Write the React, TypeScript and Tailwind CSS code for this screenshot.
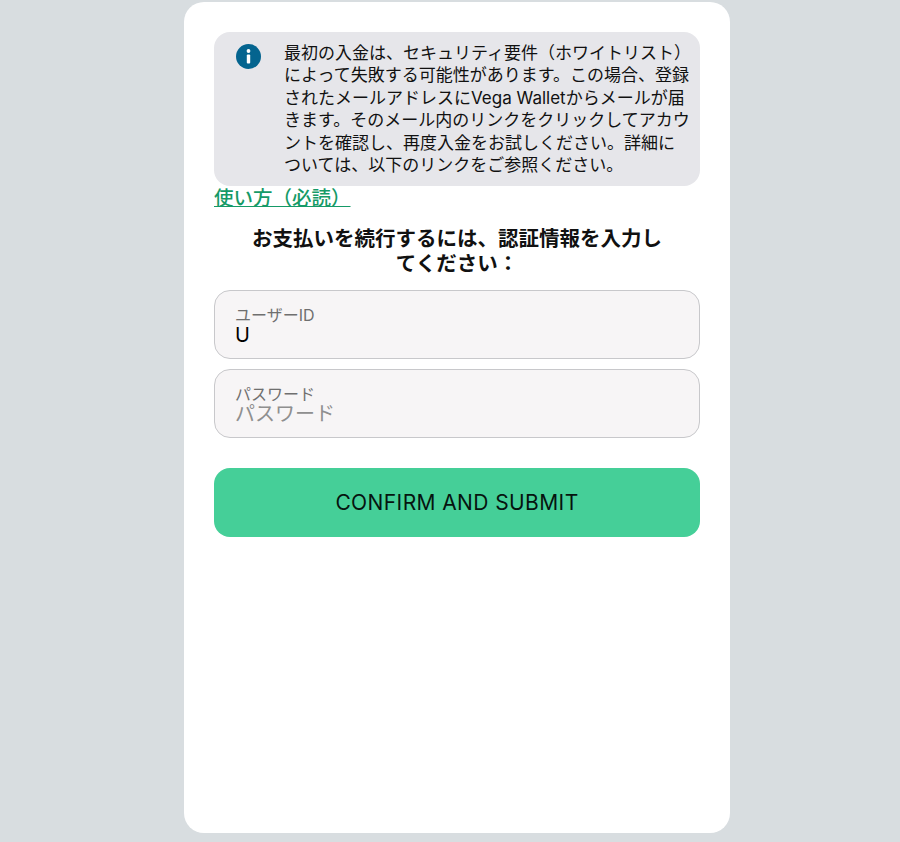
const font = "font-['Inter','Noto_Sans_CJK_JP',sans-serif]";

function Field({ label, value, placeholder }: { label: string; value?: string; placeholder?: string }) {
  return (
    <label className="block h-[69px] rounded-2xl border border-[#c8c8cb] bg-[#f7f5f6] px-[20px] pt-[15px]">
      <span className="block text-[16px] leading-[18px] text-[#6f6f6f]">{label}</span>
      <input
        readOnly
        value={value}
        placeholder={placeholder}
        className="block h-[22px] w-full bg-transparent text-[20px] leading-[22px] text-black outline-none placeholder:text-[#8f8f8f]"
      />
    </label>
  );
}

export default function App() {
  return (
    <div className={`min-h-screen bg-[#d8dde0] pt-[2px] ${font}`}>
      <div className="ml-[184px] flex h-[831px] w-[546px] flex-col rounded-[20px] bg-white px-[30px] pt-[30px]">
        <div className="flex h-[154px] rounded-2xl bg-[#e6e6ea] py-[10px] pr-[10px]">
          <div className="w-[70px] shrink-0 pl-[21px] pt-[1px]">
            <svg width="27" height="27" viewBox="0 0 27 27">
              <circle cx="13.5" cy="13.5" r="12.5" fill="#04648f" />
              <circle cx="13.5" cy="8" r="1.9" fill="#fff" />
              <rect x="11.8" y="11.5" width="3.4" height="9" rx="1" fill="#fff" />
            </svg>
          </div>
          <p className="text-[17px] leading-[22.4px] text-[#111]">
            最初の入金は、セキュリティ要件（ホワイトリスト）によって失敗する可能性があります。この場合、登録されたメールアドレスにVega Walletからメールが届きます。そのメール内のリンクをクリックしてアカウントを確認し、再度入金をお試しください。詳細に
            <br />
            ついては、以下のリンクをご参照ください。
          </p>
        </div>
        <a href="#" className="w-fit text-[19.5px] font-medium leading-6 text-[#159a67] underline">使い方（必読）</a>
        <h2 className="mx-auto mt-[16px] w-[420px] text-center text-[20.5px] font-bold leading-[25px] text-[#111]">
          お支払いを続行するには、認証情報を入力してください：
        </h2>
        <div className="mt-[14px] flex flex-col gap-[10px]">
          <Field label="ユーザーID" value="U" />
          <Field label="パスワード" placeholder="パスワード" />
        </div>
        <button className="mt-[30px] h-[69px] rounded-2xl bg-[#45cf98] text-[21px] tracking-[0.4px] text-[#06140f]">
          CONFIRM AND SUBMIT
        </button>
      </div>
    </div>
  );
}
